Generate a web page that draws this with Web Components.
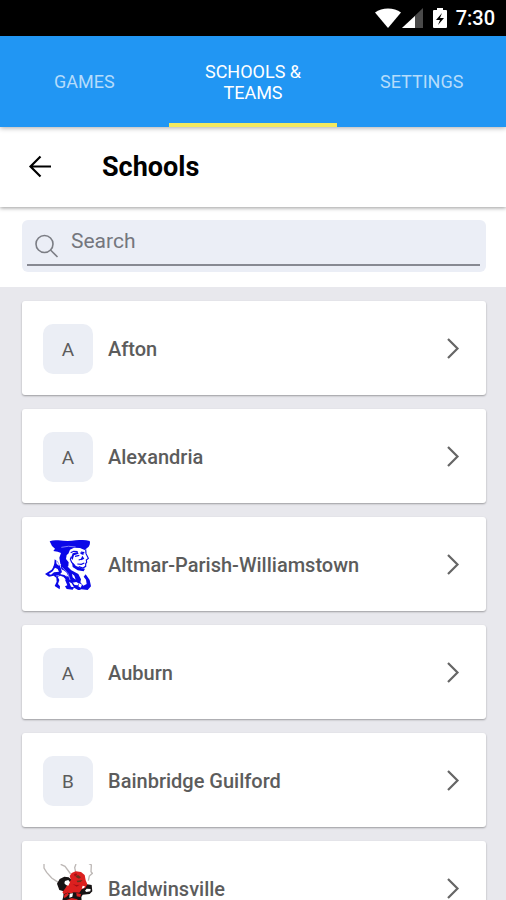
<!DOCTYPE html>
<html lang="en">
<head>
<meta charset="utf-8">
<meta name="viewport" content="width=device-width, initial-scale=1">
<title>Schools</title>
<style>
  body {
    margin: 0;
    font-family: Roboto, "Noto Sans", sans-serif;
    color: #5c5c5c;
    background: #e8e8ed;
  }
</style>
</head>
<body>
<school-app>
  <status-bar slot="top" time="7:30"></status-bar>
  <tab-bar slot="top">
    <tab-item href="#games">Games</tab-item>
    <tab-item href="#schools" active>Schools &amp; Teams</tab-item>
    <tab-item href="#settings">Settings</tab-item>
  </tab-bar>
  <page-header slot="top">Schools</page-header>
  <search-box slot="top"></search-box>

  <school-card name="Afton"></school-card>
  <school-card name="Alexandria"></school-card>
  <school-card name="Altmar-Parish-Williamstown"><rebel-logo slot="logo"></rebel-logo></school-card>
  <school-card name="Auburn"></school-card>
  <school-card name="Bainbridge Guilford"></school-card>
  <school-card name="Baldwinsville"><bee-logo slot="logo"></bee-logo></school-card>
</school-app>

<script>
  // shared helper: clone a template into an open shadow root
  function render(el, html) {
    const template = document.createElement('template');
    template.innerHTML = html;
    el.attachShadow({ mode: 'open' }).appendChild(template.content.cloneNode(true));
  }

  class SchoolApp extends HTMLElement {
    constructor() {
      super();
      render(this, `
        <style>
          :host { display: flex; flex-direction: column; height: 100vh; }
          header { flex: none; }
          main {
            flex: 1;
            min-height: 0;
            overflow-y: auto;
            scrollbar-width: none;
          }
          .list {
            display: flex;
            flex-direction: column;
            gap: 14px;
            padding: 14px 20px 14px 22px;
          }
        </style>
        <header><slot name="top"></slot></header>
        <main><div class="list"><slot></slot></div></main>
      `);
    }
  }

  class StatusBar extends HTMLElement {
    constructor() {
      super();
      render(this, `
        <style>
          :host {
            display: flex;
            justify-content: flex-end;
            align-items: center;
            height: 36px;
            padding-right: 11px;
            background: #000;
            color: #fff;
            font-size: 20px;
            font-weight: 500;
          }
          svg { display: block; }
          .battery { margin: 0 9px 0 10px; }
        </style>
        <svg width="26" height="20" viewBox="0 0 26 20"><path d="M0 4.500C7-1 19-1 26 4.500L13 20z" fill="#fff"/></svg>
        <svg width="22" height="20" viewBox="0 0 22 20"><path d="M22 0v20H1z" fill="#4a4a4a"/><path d="M14 8v12H1z" fill="#fff"/></svg>
        <svg class="battery" width="14" height="20" viewBox="0 0 14 20">
          <path d="M4 0h6v2h3q1 0 1 1v16q0 1-1 1H1q-1 0-1-1V3q0-1 1-1h3z" fill="#fff"/>
          <path d="M9 5 3 12h4l-2 5 6-7H7z" fill="#000"/>
        </svg>
        <span></span>
      `);
    }
    connectedCallback() {
      this.shadowRoot.querySelector('span').textContent = this.getAttribute('time');
    }
  }

  class TabBar extends HTMLElement {
    constructor() {
      super();
      render(this, `
        <style>
          :host { display: block; position: relative; z-index: 2; box-shadow: 0 1px 5px #0005; }
          nav {
            display: grid;
            grid-template-columns: repeat(3, 1fr);
            height: 91px;
            background: #2196f3;
          }
        </style>
        <nav><slot></slot></nav>
      `);
    }
  }

  class TabItem extends HTMLElement {
    constructor() {
      super();
      render(this, `
        <style>
          :host { display: flex; }
          a {
            flex: 1;
            display: flex;
            align-items: center;
            justify-content: center;
            box-sizing: border-box;
            padding: 4px 24px 0;
            border-bottom: 4px solid transparent;
            color: #b5dcfb;
            font-size: 18px;
            line-height: 21px;
            text-align: center;
            text-transform: uppercase;
            text-decoration: none;
          }
          :host([active]) a { color: #fff; border-color: #f3e95f; }
        </style>
        <a><span><slot></slot></span></a>
      `);
    }
    connectedCallback() {
      this.shadowRoot.querySelector('a').setAttribute('href', this.getAttribute('href'));
    }
  }

  class PageHeader extends HTMLElement {
    constructor() {
      super();
      render(this, `
        <style>
          :host {
            display: flex;
            align-items: center;
            gap: 42px;
            height: 80px;
            padding: 0 20px;
            position: relative;
            z-index: 1;
            background: #fff;
            box-shadow: 0 1px 4px #0006;
          }
          button { padding: 8px; border: 0; background: none; color: #000; }
          svg { display: block; }
          h1 { margin: 0; color: #000; font-size: 27px; font-weight: 700; }
        </style>
        <button type="button" aria-label="Back">
          <svg width="24" height="24" viewBox="0 0 24 24" fill="none" stroke="currentColor" stroke-width="2.200"><path d="M23 11.500H3M12.500 1.500l-10 10 10 10"/></svg>
        </button>
        <h1><slot></slot></h1>
      `);
    }
  }

  class SearchBox extends HTMLElement {
    constructor() {
      super();
      render(this, `
        <style>
          :host { display: block; padding: 13px 20px 15px 22px; background: #fff; }
          label {
            display: flex;
            height: 52px;
            box-sizing: border-box;
            padding: 0 6px 6px 5px;
            border-radius: 6px;
            background: #ebeef6;
          }
          .line {
            flex: 1;
            display: flex;
            align-items: center;
            gap: 12px;
            box-sizing: border-box;
            padding: 0 0 2px 8px;
            border-bottom: 2px solid #878992;
          }
          svg { flex: none; align-self: flex-end; margin-bottom: 4px; }
          input {
            flex: 1;
            min-width: 0;
            padding: 0;
            border: 0;
            outline: 0;
            background: none;
            color: #333;
            font: 21px Roboto, sans-serif;
          }
          input::placeholder { color: #74767d; opacity: 1; }
        </style>
        <label>
          <span class="line">
            <svg width="24" height="24" viewBox="0 0 24 24" fill="none" stroke="#7b7d84" stroke-width="1.600"><circle cx="9.500" cy="10" r="8.500"/><path d="m15.500 16 7 7"/></svg>
            <input type="text" placeholder="Search" aria-label="Search">
          </span>
        </label>
      `);
    }
  }

  class SchoolCard extends HTMLElement {
    constructor() {
      super();
      render(this, `
        <style>
          :host { display: block; }
          a {
            display: flex;
            align-items: center;
            gap: 15px;
            height: 94px;
            box-sizing: border-box;
            padding: 2px 26px 0 21px;
            border-radius: 3px;
            background: #fff;
            box-shadow: 0 1px 2px #0005;
            color: inherit;
            text-decoration: none;
          }
          .badge {
            flex: none;
            display: grid;
            place-items: center;
            width: 50px;
            height: 50px;
            border-radius: 10px;
            background: #ebeef5;
            font-size: 19px;
          }
          .name { flex: 1; font-size: 20px; font-weight: 500; }
        </style>
        <a>
          <slot name="logo"><span class="badge"></span></slot>
          <span class="name"></span>
          <svg width="16" height="24" viewBox="0 0 16 24" fill="none" stroke="#666" stroke-width="2.200"><path d="m4 2 9.500 9.500L4 21"/></svg>
        </a>
      `);
    }
    connectedCallback() {
      const name = this.getAttribute('name');
      this.shadowRoot.querySelector('a').href = '#' + encodeURIComponent(name);
      this.shadowRoot.querySelector('.name').textContent = name;
      this.shadowRoot.querySelector('.badge').textContent = name[0];
    }
  }

  // Man in a tricorn hat, one blue ink on white
  class RebelLogo extends HTMLElement {
    constructor() {
      super();
      render(this, `
        <style>
          :host { display: block; width: 50px; height: 50px; }
          svg { display: block; }
        </style>
        <svg width="50" height="50" viewBox="21 24 150 150">
          <!-- hat and hair -->
          <path d="M41 28q12-5 26-3 30 4 52 0 22-3 42 2 3 8-3 17l-12 10-14-6-18-1-12 6-5 12-5 4-2 12 8 10-1 12-10 6-14-14-3-18 5-14-10-4-13-2 5-7-9-8z" fill="#0b08e8"/>
          <!-- face -->
          <g fill="none" stroke="#0b08e8" stroke-width="3.500">
            <path d="M149 52l1 13 7 14-6 5 1 7-3 4v8l-8 5-13-4M104 62l9-4 12 1M135 60l10 2M106 74l-3 8 4 9 8 8M117 73l13-3M128 84l10-3M124 96l12 1 9-4"/>
          </g>
          <g fill="#0b08e8">
            <path d="m110 64 15-4 3 5-14 5-4 14-5-6zM131 62l13-2-2 9-6-2zM139 71l6 9-9 5-1-5z"/>
            <path d="m108 91 12 11 17 7 10 1-4 8-18-3-15-10z"/>
            <!-- collar and coat -->
            <path d="m84 87 9 15 13 13 21 11 8 16-3 15-11-7-12 2-14-13-9-20-10-8-2-12z"/>
            <path d="m56 82 10 8 8 17 4 14-9 8-12-12-5-12 3-11z"/>
            <path d="m55 100-8 13-20 13 12 8 14-3 8 6 1 12-6 13 15 10 1-9-6-7 4-12-5-10 9-3 12 10 8 19-7 3 5 8 18 2 4-6 14 8 8-3 19 2 10-11-4-19-12-17-6 7 7 9 2 13-10 5-9-10-8 9-9-1-17-21-14-9-11-2z"/>
          </g>
          <g fill="#fff">
            <path d="m57 107 8 4 4 8-15 2-9 7-7-2 12-8zM60 86l7 7 3 9-8-6zM80 113l11 8 8 15-12-8-10-5zM108 125l7 6 4 12-9-7zM99 149l8 5 7 12-9-2zM130 154l8 4-4 9-7-4zM71 132l11 2 8 9-10-1z"/>
          </g>
          <path d="M76 46q22-6 43-1M79 106l17 19 6 19M60 132l10-2" fill="none" stroke="#8281fa" stroke-width="3"/>
        </svg>
      `);
    }
  }

  // Red and black insect with long grey antennae
  class BeeLogo extends HTMLElement {
    constructor() {
      super();
      render(this, `
        <style>
          :host { display: block; width: 50px; height: 50px; }
          svg { display: block; }
        </style>
        <svg width="50" height="50" viewBox="39 45 150 150">
          <g fill="none" stroke="#bdb8b6" stroke-width="4">
            <path d="M42 45v12l8 13 15 17 21 14M92 46l13 6 17 23M138 45l-4 11 3 13M177 44l7 4-1 20 4 5-9 8-3 14"/>
          </g>
          <!-- arms and legs -->
          <path d="m81 104 8-14 14-7 13 2 10 8-4 15-8 16-13 3-13-4zM101 126l18-11 28 1 20-11 18 3 2 19-8 8-21 2-4 7 4 50h-22l-6-28-10 28H98l-4-28 6-24z" fill="#171314"/>
          <!-- head and body -->
          <path d="m119 81 6-9 12-5 16 2 11 9 3 16 5 12-6 11-10 3-8 11-17-1-7 3-12-2-10 5-5-6 9-12 9-16 8-9z" fill="#dc201f"/>
          <path d="m103 137 10-6 4 5-9 9-7 2zM139 132l14 3-2 9-11-2zM107 154l18-7 17 4 9 19-4 24h-9l-8-23-11 22h-11z" fill="#dc201f"/>
          <g fill="#fff">
            <path d="m105 96 10-3 5 7-5 10-7-2-5-5zM119 134l10-1-2 10-9 3zM170 119l12 1-1 7-12 2-4-4zM158 110l7 2-3 5-7 2z"/>
          </g>
          <path d="m136 83 8-5 9 7-6 4zM140 95l18-2-6 6-10 1z" fill="#65331e"/>
          <path d="m132 76 7-3 3 6-8 3zM128 105l10 3 11-1-9 6z" fill="#a50f14"/>
        </svg>
      `);
    }
  }

  customElements.define('school-app', SchoolApp);
  customElements.define('status-bar', StatusBar);
  customElements.define('tab-bar', TabBar);
  customElements.define('tab-item', TabItem);
  customElements.define('page-header', PageHeader);
  customElements.define('search-box', SearchBox);
  customElements.define('school-card', SchoolCard);
  customElements.define('rebel-logo', RebelLogo);
  customElements.define('bee-logo', BeeLogo);
</script>
</body>
</html>
